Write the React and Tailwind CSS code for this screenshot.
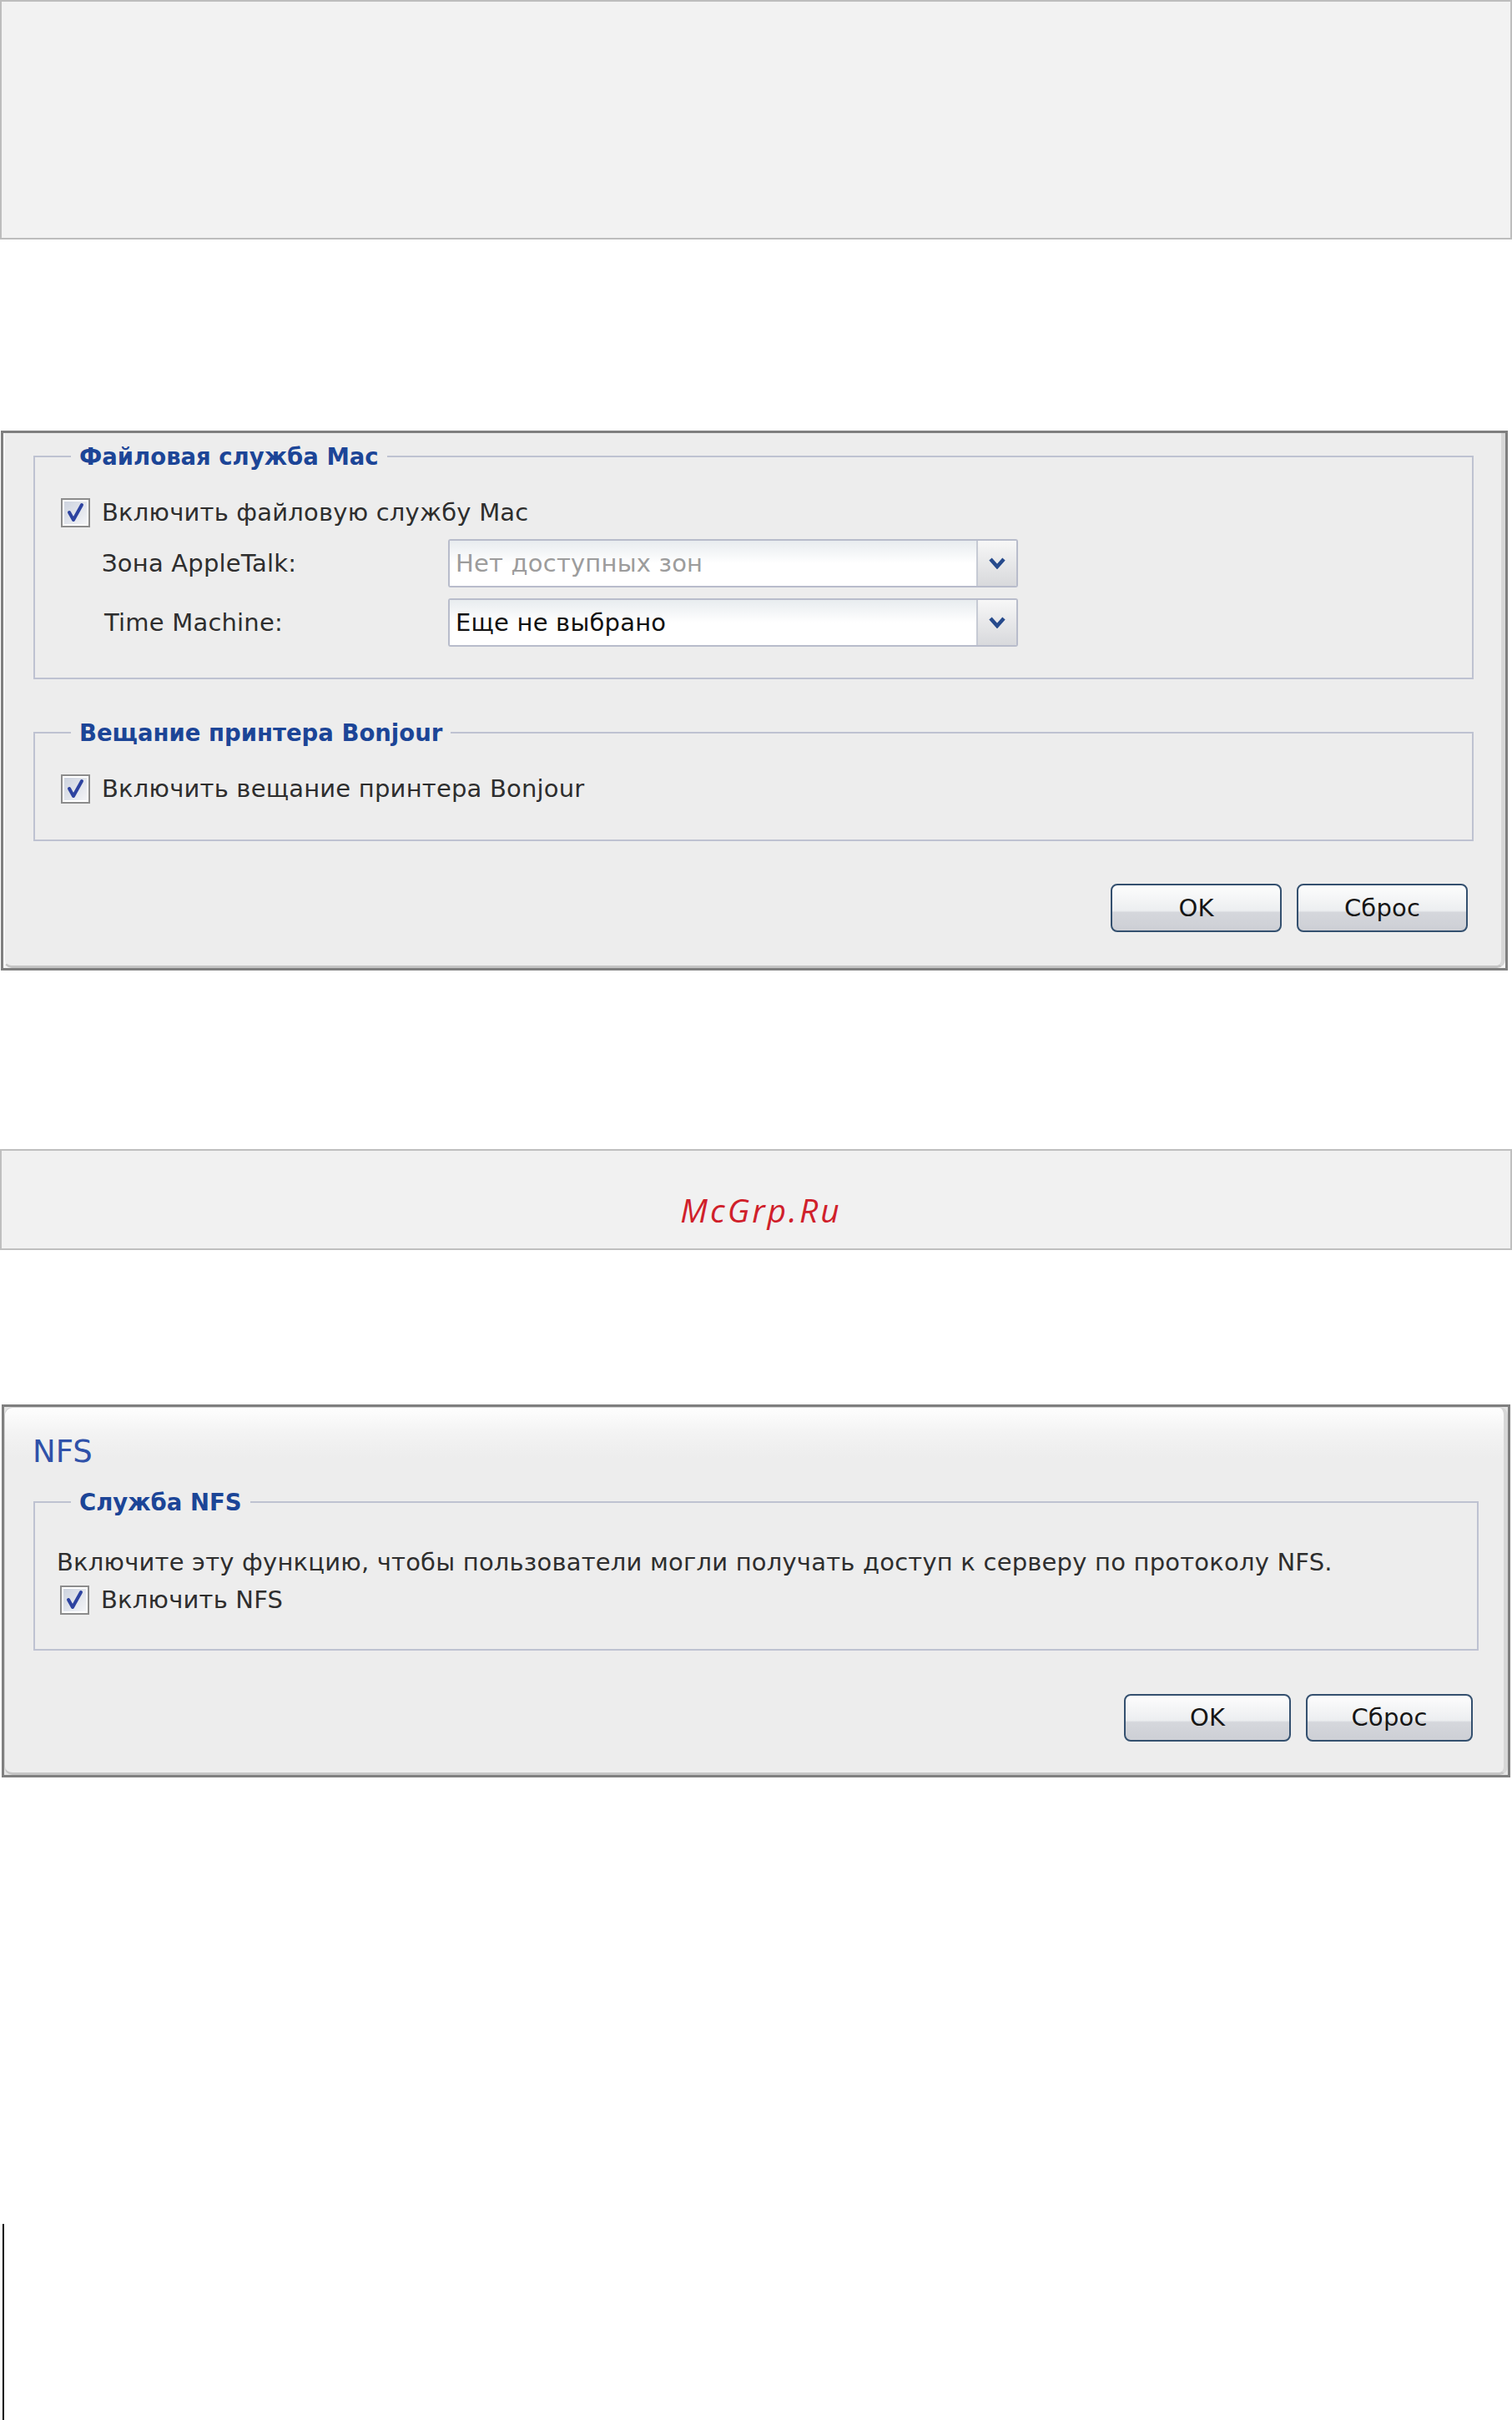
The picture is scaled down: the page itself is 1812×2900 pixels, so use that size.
import React from "react";

function Check() {
  return (
    <div className="w-[35px] h-[35px] shrink-0 border-2 border-[#8c8c8c] bg-white p-[2px]">
      <div className="w-full h-full bg-linear-to-br from-[#cdd3df] to-[#f3f4f7] flex items-center justify-center">
        <svg width="27" height="27" viewBox="0 0 27 27">
          <polyline points="6,13 11,22 21,4" fill="none" stroke="#2d43a0" strokeWidth="4" strokeLinecap="round" strokeLinejoin="round" />
        </svg>
      </div>
    </div>
  );
}

function Select({ text, muted }) {
  return (
    <div className="w-[683px] h-[58px] border-2 border-[#b8bccb] rounded-[3px] flex bg-white overflow-hidden">
      <div
        className={
          muted
            ? "flex-1 flex items-center pl-[7px] bg-linear-to-b from-[#e8ecef] via-white to-white text-[#9c9c9c]"
            : "flex-1 flex items-center pl-[7px] bg-linear-to-b from-[#e8ecef] via-white to-white text-[#111111]"
        }
      >
        {text}
      </div>
      <div className="w-[48px] border-l-2 border-[#c6cad4] bg-linear-to-b from-[#f7f7f7] to-[#d8d9dc] flex items-center justify-center">
        <svg width="20" height="14" viewBox="0 0 20 14">
          <polyline points="2,2 10,11 18,2" fill="none" stroke="#264a8c" strokeWidth="4.5" />
        </svg>
      </div>
    </div>
  );
}

function Btn({ children, narrow }) {
  return (
    <div
      className={
        narrow
          ? "w-[200px] h-[57px] rounded-[8px] border-2 border-[#34506f] bg-[linear-gradient(to_bottom,#fdfdfd_0%,#eceef0_56%,#d5d7dc_60%,#cdcfd5_100%)] flex items-center justify-center text-[#161616]"
          : "w-[205px] h-[58px] rounded-[8px] border-2 border-[#34506f] bg-[linear-gradient(to_bottom,#fdfdfd_0%,#eceef0_56%,#d5d7dc_60%,#cdcfd5_100%)] flex items-center justify-center text-[#161616]"
      }
    >
      {children}
    </div>
  );
}

function Legend({ children, nfs }) {
  return (
    <legend
      className={
        nfs
          ? "ml-[17px] px-[10px] leading-[32px] font-bold text-[27.5px] tracking-normal text-[#1c4597]"
          : "ml-[12px] px-[10px] leading-[32px] font-bold text-[27.5px] tracking-normal text-[#1c4597]"
      }
    >
      {children}
    </legend>
  );
}

export default function App() {
  return (
    <div className="w-[1812px] h-[2900px] bg-white overflow-hidden font-['DejaVu_Sans',sans-serif] text-[29px] leading-[35px] tracking-[0.2px] text-[#2e2e2e]">
      <div className="h-[287px] border-2 border-[#bdbdbd] bg-[#f2f2f2]" />

      {/* Mac file service panel */}
      <div className="mt-[229px] ml-[1px] w-[1806px] h-[647px] border-[3px] border-[#7f7f7f] bg-[#f7f7f7] flex flex-col">
        <div className="flex-1 bg-[#ededed] rounded-b-[10px] border-l-2 border-l-[#f8f8f8] border-r-[5px] border-r-[#d7d7d7] border-b-[3px] border-b-[#c4c4c4] pt-[12px] pl-[34px] pr-[33px]">
          <fieldset className="border-2 border-[#bec2d1] pt-[34px] pl-[31px] pb-[37px]">
            <Legend>Файловая служба Mac</Legend>
            <div className="h-[35px] flex items-center gap-[14px]">
              <Check />
              <span>Включить файловую службу Mac</span>
            </div>
            <div className="mt-[14px] flex items-center">
              <div className="w-[464px] pl-[49px]">Зона AppleTalk:</div>
              <Select text="Нет доступных зон" muted />
            </div>
            <div className="mt-[13px] flex items-center">
              <div className="w-[464px] pl-[52px]">Time Machine:</div>
              <Select text="Еще не выбрано" />
            </div>
          </fieldset>

          <fieldset className="mt-[48px] border-2 border-[#bec2d1] pt-[34px] pl-[31px] pb-[43px]">
            <Legend>Вещание принтера Bonjour</Legend>
            <div className="h-[35px] flex items-center gap-[14px]">
              <Check />
              <span>Включить вещание принтера Bonjour</span>
            </div>
          </fieldset>

          <div className="mt-[51px] flex justify-end gap-[18px] pr-[7px]">
            <Btn>OK</Btn>
            <Btn>Сброс</Btn>
          </div>
        </div>
      </div>

      {/* watermark bar */}
      <div className="mt-[214px] h-[121px] border-2 border-[#bfbfbf] bg-[#f1f1f1] pt-[51px] pl-[12px] text-center font-['Open_Sans',sans-serif] italic text-[39px] leading-[40px] tracking-[3px] text-[#d0202a]">
        McGrp.Ru
      </div>

      {/* NFS panel */}
      <div className="mt-[185px] ml-[2px] w-[1808px] h-[447px] border-[3px] border-[#7f7f7f] bg-[#e4e4e4] flex flex-col">
        <div className="flex-1 rounded-[10px] bg-[linear-gradient(to_bottom,#fefefe_0px,#f3f3f3_30px,#ededed_60px,#ededed_100%)] border border-[#d2d2d2] border-r-[5px] border-r-[#d7d7d7] border-b-[3px] border-b-[#c4c4c4] pt-[33px] pl-[34px] pr-[30px]">
          <div className="-ml-px leading-[40px] text-[37px] tracking-normal text-[#2f51a9]">NFS</div>
          <fieldset className="mt-[24px] border-2 border-[#bec2d1] pt-[39px] pl-[26px] pb-[41px]">
            <Legend nfs>Служба NFS</Legend>
            <div className="leading-[34px]">
              Включите эту функцию, чтобы пользователи могли получать доступ к серверу по протоколу NFS.
            </div>
            <div className="mt-[11px] ml-[4px] h-[35px] flex items-center gap-[14px]">
              <Check />
              <span>Включить NFS</span>
            </div>
          </fieldset>
          <div className="mt-[52px] flex justify-end gap-[18px] pr-[7px]">
            <Btn narrow>OK</Btn>
            <Btn narrow>Сброс</Btn>
          </div>
        </div>
      </div>

      <div className="mt-[535px] ml-[3px] w-[2px] h-[235px] bg-black" />
    </div>
  );
}
